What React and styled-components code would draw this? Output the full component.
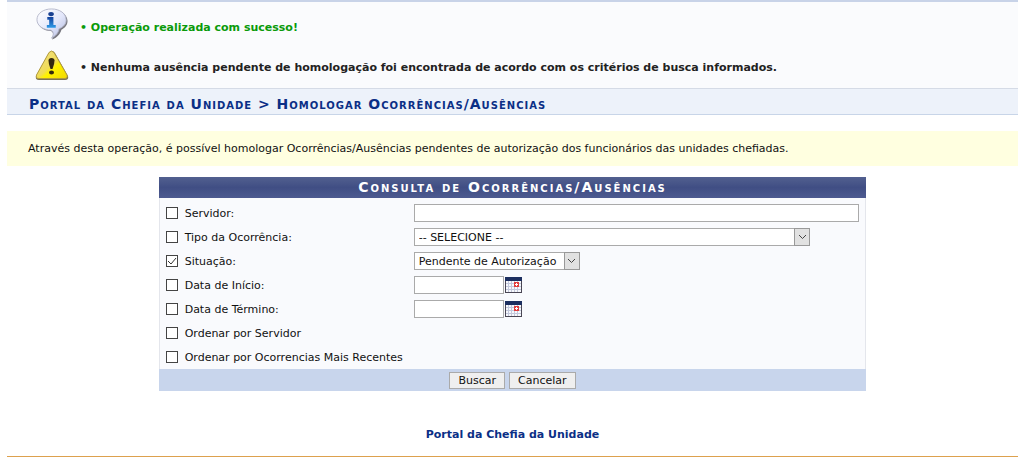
import React, {useState} from 'react'
import styled, {createGlobalStyle} from 'styled-components'

const InfoIcon = () => (
    <svg width="34" height="32" viewBox="0 0 34 34" aria-hidden="true">
        <defs>
            <linearGradient id="bubble" x1="0" y1="0" x2="1" y2="1">
                <stop offset="0" stopColor="#ffffff" />
                <stop offset="0.55" stopColor="#e2e6fa" />
                <stop offset="1" stopColor="#b0b8de" />
            </linearGradient>
            <linearGradient id="letter" x1="0" y1="0" x2="0" y2="1">
                <stop offset="0" stopColor="#123f9c" />
                <stop offset="1" stopColor="#2f9be8" />
            </linearGradient>
        </defs>
        <path d="M17 2C8 2 2 7 2 13.500C2 20 8 24 16 24.500C19 26 19 30 17 33.500C23 31 26 27 27 23C31 21 33.500 18 33.500 13.500C33 6 26 2 17 2Z" fill="#77777f" />
        <path d="M16.500 1C7.500 1 1 6 1 12.500C1 19 8 23.500 16 23.500C19 25 19 29 16.500 32C21 29.500 24 26 24.500 22C29.500 20 32 17 32 12.500C32 6 25.500 1 16.500 1Z" fill="url(#bubble)" stroke="#b4b7cb" />
        <ellipse cx="16" cy="6.500" rx="3" ry="2.300" fill="#173f91" />
        <path d="M12 9.500H18.500V18H21V21H11.500V18H14V12.500H12Z" fill="url(#letter)" />
    </svg>
)

const WarningIcon = () => (
    <svg width="34" height="33" viewBox="0 -2 34 33" aria-hidden="true">
        <defs>
            <linearGradient id="warn" x1="0" y1="0" x2="1" y2="1">
                <stop offset="0" stopColor="#f1df87" />
                <stop offset="0.5" stopColor="#f0dc58" />
                <stop offset="0.6" stopColor="#fff200" />
                <stop offset="1" stopColor="#f2d900" />
            </linearGradient>
        </defs>
        <path d="M14 3Q17 -1 20 3L33 26Q34 30 30 30H4Q0 30 1 26Z" fill="#7b7352" />
        <path d="M14 2.500Q16.500 -0.500 19 2.500L32 25Q33 28.500 29.500 28.500H4Q0.500 28.500 1.500 25Z" fill="url(#warn)" stroke="#b39c3c" />
        <path d="M13.500 10.500Q13.500 8 16.500 8Q19.500 8 19.500 10.500Q19.500 14 17.500 19H15.500Q13.500 14 13.500 10.500Z" fill="#33290f" />
        <ellipse cx="16.500" cy="22.500" rx="2.500" ry="2" fill="#33290f" />
    </svg>
)

const CalendarIcon = () => (
    <svg width="17" height="16" viewBox="0 0 17 16" aria-hidden="true">
        <rect width="17" height="16" fill="#4a4654" />
        <rect x="1" y="4" width="15" height="11" fill="#f7f8fc" />
        <rect width="17" height="4" fill="#1d2f60" />
        <path d="M3.500 4V15M6.500 4V15M9.500 4V15M12.500 4V15M1 6.500H16M1 9.500H16M1 12.500H16" stroke="#c3c8dc" />
        <rect x="9" y="5" width="5" height="5" fill="#e23b3b" />
        <path d="M11.500 6V9M10 7.500H13" stroke="#ffffff" />
    </svg>
)

const SelectField = ({id, size, options}) => (
    <SelectWrap $size={size}>
        <Select id={id}>
            {options.map((option) => <option key={option}>{option}</option>)}
        </Select>
        <Arrow>
            <svg width="9" height="6" viewBox="0 0 9 6" aria-hidden="true">
                <path d="M1 1L4.500 4.500L8 1" fill="none" stroke="#444444" />
            </svg>
        </Arrow>
    </SelectWrap>
)

const DateField = ({id}) => (
    <>
        <DateInput id={id} type="text" />
        <CalendarButton type="button" aria-label="Calendário"><CalendarIcon /></CalendarButton>
    </>
)

const TextField = ({id}) => <Input id={id} type="text" />

const filters = [
    {id: 'servidor', label: 'Servidor:', field: <TextField id="servidor-valor" />},
    {id: 'tipo', label: 'Tipo da Ocorrência:', field: <SelectField id="tipo-valor" size="89%" options={['-- SELECIONE --']} />},
    {id: 'situacao', label: 'Situação:', field: <SelectField id="situacao-valor" options={['Pendente de Autorização']} />},
    {id: 'inicio', label: 'Data de Início:', field: <DateField id="inicio-valor" />},
    {id: 'termino', label: 'Data de Término:', field: <DateField id="termino-valor" />},
    {id: 'ordServidor', label: 'Ordenar por Servidor'},
    {id: 'ordRecentes', label: 'Ordenar por Ocorrencias Mais Recentes'},
]

const App = () => {
    const [checked, setChecked] = useState({situacao: true})

    const toggle = (id) => setChecked({...checked, [id]: !checked[id]})

    return (
        <>
            <GlobalStyle />
            <Page>
                <Messages>
                    <Message $color="#0a9a0a">
                        <InfoIcon />
                        <span>• Operação realizada com sucesso!</span>
                    </Message>
                    <Message $color="#222222">
                        <WarningIcon />
                        <span>• Nenhuma ausência pendente de homologação foi encontrada de acordo com os critérios de busca informados.</span>
                    </Message>
                </Messages>

                <Title>Portal da Chefia da Unidade &gt; Homologar Ocorrências/Ausências</Title>

                <Description>
                    Através desta operação, é possível homologar Ocorrências/Ausências pendentes de autorização dos funcionários das unidades chefiadas.
                </Description>

                <Form onSubmit={(e) => e.preventDefault()}>
                    <Caption>Consulta de Ocorrências/Ausências</Caption>
                    <Body>
                        {filters.map(({id, label, field}) => (
                            <Row key={id}>
                                <LabelCell>
                                    <Checkbox
                                        id={id}
                                        type="checkbox"
                                        aria-label={label}
                                        checked={!!checked[id]}
                                        onChange={() => toggle(id)}
                                    />
                                    <label htmlFor={field ? `${id}-valor` : id}>{label}</label>
                                </LabelCell>
                                {field && <Field>{field}</Field>}
                            </Row>
                        ))}
                    </Body>
                    <Actions>
                        <Button type="submit">Buscar</Button>
                        <Button type="button">Cancelar</Button>
                    </Actions>
                </Form>

                <Footer>
                    <a href="#portal">Portal da Chefia da Unidade</a>
                </Footer>
            </Page>
        </>
    )
}

export default App

const GlobalStyle = createGlobalStyle`
    * {
        box-sizing: border-box;
    }

    body {
        margin: 0;
        background: #ffffff;
        color: #111111;
        font-family: Verdana, "DejaVu Sans", sans-serif;
        font-size: 11px;
    }

    input, select, button {
        font: inherit;
        color: inherit;
    }
`

const Page = styled.div`
    margin: 0 6px 0 7px;
`

const Messages = styled.div`
    border-top: 2px solid #c8d3e8;
    background: #fafbfd;
    padding-top: 6px;
`

const Message = styled.div`
    display: flex;
    align-items: flex-start;
    gap: 11px;
    height: 40px;
    padding: 0 28px;
    color: ${(props) => props.$color};
    font-weight: bold;

    span {
        line-height: 40px;
    }
`

const Title = styled.h2`
    margin: 0;
    padding: 0 22px;
    height: 27px;
    line-height: 30px;
    background: #edf2fa;
    border-top: 1px solid #d5dbe6;
    border-bottom: 1px solid #c8d5e8;
    color: #0b2f86;
    font-size: 14px;
    font-variant: small-caps;
    letter-spacing: 1px;
`

const Description = styled.p`
    margin: 16px 0 11px;
    padding: 0 21px;
    line-height: 35px;
    background: #ffffe0;
`

const Form = styled.form`
    width: 70%;
    margin: 0 auto;
`

const Caption = styled.h3`
    margin: 0;
    line-height: 21px;
    background: linear-gradient(#52608f, #404e84 50%, #4d5a90);
    color: #ffffff;
    font-size: 14px;
    font-variant: small-caps;
    letter-spacing: 2px;
    text-align: center;
`

const Body = styled.div`
    padding: 3px 0 0;
    background: #f9fafd;
    border: 1px solid #e4e6ec;
    border-width: 0 1px;
`

const Row = styled.div`
    display: flex;
    align-items: center;
    height: 24px;
`

const LabelCell = styled.div`
    display: flex;
    align-items: center;
    gap: 7px;
    width: 36%;
    padding-left: 6px;
    white-space: nowrap;
`

const Checkbox = styled.input`
    appearance: none;
    flex: none;
    width: 12px;
    height: 12px;
    margin: 0;
    border: 1px solid #444444;
    background: #ffffff;

    &:checked {
        background: #ffffff url("data:image/svg+xml,%3Csvg xmlns='http://www.w3.org/2000/svg' viewBox='0 0 10 10'%3E%3Cpath d='M1 5L4 8L9 2' fill='none' stroke='%23333'/%3E%3C/svg%3E");
    }
`

const Field = styled.div`
    display: flex;
    align-items: center;
    flex: 1;
    padding-right: 6px;
`

const Input = styled.input`
    width: 100%;
    height: 18px;
    padding: 0 4px;
    border: 1px solid #aaaaaa;
    background: #ffffff;
`

const DateInput = styled(Input)`
    width: 90px;
`

const CalendarButton = styled.button`
    display: flex;
    margin: 0 0 0 1px;
    padding: 0;
    border: none;
    background: none;
    cursor: pointer;
`

const SelectWrap = styled.div`
    position: relative;
    width: ${(props) => props.$size || 'auto'};
`

const Select = styled.select`
    appearance: none;
    display: block;
    width: 100%;
    height: 18px;
    padding: 0 22px 0 4px;
    border: 1px solid #aaaaaa;
    border-radius: 0;
    background: #ffffff;
`

const Arrow = styled.span`
    position: absolute;
    top: 0;
    right: 0;
    bottom: 0;
    display: flex;
    align-items: center;
    justify-content: center;
    width: 16px;
    border: 1px solid #999999;
    background: #e1e1e1;
    pointer-events: none;
`

const Actions = styled.div`
    display: flex;
    align-items: center;
    justify-content: center;
    gap: 4px;
    height: 22px;
    background: #c8d5ec;
`

const Button = styled.button`
    height: 17px;
    padding: 0 8px;
    border: 1px solid #aaaaaa;
    background: #efefef;
    line-height: 15px;
`

const Footer = styled.div`
    margin-top: 35px;
    padding-bottom: 12px;
    border-bottom: 1px solid #dda14e;
    line-height: 18px;
    text-align: center;

    a {
        color: #0b2f86;
        font-weight: bold;
        text-decoration: none;
    }
`
